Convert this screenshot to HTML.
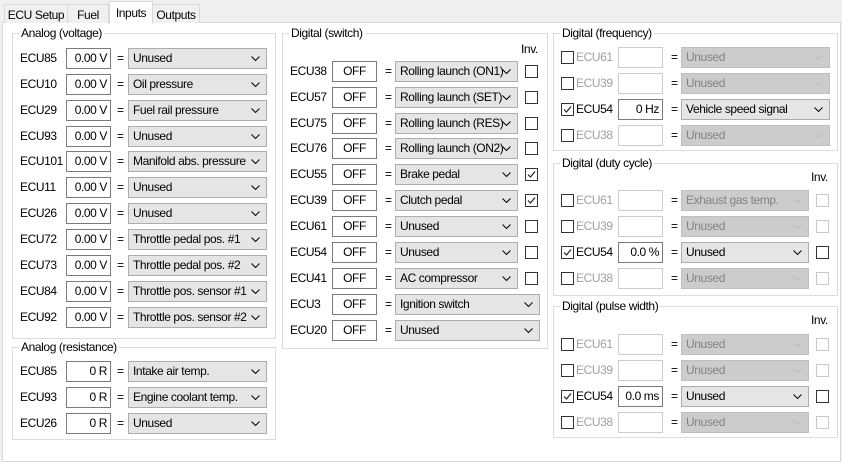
<!DOCTYPE html>
<html><head><meta charset="utf-8">
<style>
*{box-sizing:border-box;margin:0;padding:0}
body{width:842px;height:454px;background:#f0f0f0;font-family:"Liberation Sans",sans-serif;font-size:12px;letter-spacing:-0.4px;color:#000;position:relative;overflow:hidden}
.a{position:absolute}
.tab{position:absolute;top:4px;height:19px;border:1px solid #d9d9d9;border-bottom:none;background:#f0f0f0;padding:3px 0 0 0;text-align:center}
.page{position:absolute;left:2px;top:22px;width:839px;height:440px;background:#fff;border:1px solid #d9d9d9}
.g{position:absolute;border:1px solid #dcdcdc}
.gt{position:absolute;top:-8px;left:6px;background:#fff;padding:0 2px;line-height:14px}
.lb{position:absolute;line-height:14px}
.bx{position:absolute;height:21px;border:1px solid #7a7a7a;background:#fff;line-height:19px;padding:0 3px;text-align:right}
.bx.c{text-align:center}
.bx.d{border-color:#cccccc}
.eq{position:absolute;line-height:14px}
.sl{position:absolute;height:21px;border:1px solid #adadad;background:#e5e5e5;line-height:19px;padding-left:4px;white-space:nowrap;overflow:hidden}
.sl.d{background:#cccccc;border-color:#bfbfbf;color:#838383}
.sl svg{position:absolute;right:6px;top:7px}
.cb{position:absolute;width:13px;height:13px;border:1px solid #333;background:#fff}
.cb.d{border-color:#c8c8c8}
.dis{color:#a0a0a0}
</style></head><body>
<div class="page"></div>
<div class="tab" style="left:4px;width:64px">ECU Setup</div>
<div class="tab" style="left:67px;width:42px">Fuel</div>
<div class="tab" style="left:152px;width:48px">Outputs</div>
<div class="tab" style="left:109px;top:1px;height:23px;width:44px;background:#fff;padding-top:4px">Inputs</div>

<div class="g" style="left:12px;top:33px;width:264px;height:306px"><div class="gt">Analog (voltage)</div></div>
<div class="g" style="left:12px;top:347px;width:264px;height:93px"><div class="gt">Analog (resistance)</div></div>
<div class="g" style="left:282px;top:33px;width:266px;height:316px"><div class="gt">Digital (switch)</div></div>
<div class="lb" style="left:521px;top:42px">Inv.</div>
<div class="g" style="left:553px;top:33px;width:285px;height:118px"><div class="gt">Digital (frequency)</div></div>
<div class="g" style="left:553px;top:163px;width:285px;height:133px"><div class="gt">Digital (duty cycle)</div></div>
<div class="lb" style="left:811px;top:170px">Inv.</div>
<div class="g" style="left:553px;top:306px;width:285px;height:132px"><div class="gt">Digital (pulse width)</div></div>
<div class="lb" style="left:811px;top:313px">Inv.</div>

<svg width="0" height="0" style="position:absolute"><defs><symbol id="ch" viewBox="0 0 9 5"><path d="M0.5 0.5L4.5 4.5L8.5 0.5" fill="none" stroke="currentColor" stroke-width="1"/></symbol><symbol id="ck" viewBox="0 0 11 11"><path d="M2 5.5L4.5 8L9 2.5" fill="none" stroke="#222" stroke-width="1.2"/></symbol></defs></svg>

<div class="lb" style="left:20px;top:51px">ECU85</div><div class="bx" style="left:66px;top:48px;width:45px">0.00 V</div><div class="eq" style="left:117px;top:51px">=</div><div class="sl" style="left:128px;top:48px;width:139px">Unused<svg width="9" height="5"><use href="#ch"/></svg></div>
<div class="lb" style="left:20px;top:77px">ECU10</div><div class="bx" style="left:66px;top:74px;width:45px">0.00 V</div><div class="eq" style="left:117px;top:77px">=</div><div class="sl" style="left:128px;top:74px;width:139px">Oil pressure<svg width="9" height="5"><use href="#ch"/></svg></div>
<div class="lb" style="left:20px;top:103px">ECU29</div><div class="bx" style="left:66px;top:100px;width:45px">0.00 V</div><div class="eq" style="left:117px;top:103px">=</div><div class="sl" style="left:128px;top:100px;width:139px">Fuel rail pressure<svg width="9" height="5"><use href="#ch"/></svg></div>
<div class="lb" style="left:20px;top:129px">ECU93</div><div class="bx" style="left:66px;top:126px;width:45px">0.00 V</div><div class="eq" style="left:117px;top:129px">=</div><div class="sl" style="left:128px;top:126px;width:139px">Unused<svg width="9" height="5"><use href="#ch"/></svg></div>
<div class="lb" style="left:20px;top:154px">ECU101</div><div class="bx" style="left:66px;top:151px;width:45px">0.00 V</div><div class="eq" style="left:117px;top:154px">=</div><div class="sl" style="left:128px;top:151px;width:139px">Manifold abs. pressure<svg width="9" height="5"><use href="#ch"/></svg></div>
<div class="lb" style="left:20px;top:180px">ECU11</div><div class="bx" style="left:66px;top:177px;width:45px">0.00 V</div><div class="eq" style="left:117px;top:180px">=</div><div class="sl" style="left:128px;top:177px;width:139px">Unused<svg width="9" height="5"><use href="#ch"/></svg></div>
<div class="lb" style="left:20px;top:206px">ECU26</div><div class="bx" style="left:66px;top:203px;width:45px">0.00 V</div><div class="eq" style="left:117px;top:206px">=</div><div class="sl" style="left:128px;top:203px;width:139px">Unused<svg width="9" height="5"><use href="#ch"/></svg></div>
<div class="lb" style="left:20px;top:232px">ECU72</div><div class="bx" style="left:66px;top:229px;width:45px">0.00 V</div><div class="eq" style="left:117px;top:232px">=</div><div class="sl" style="left:128px;top:229px;width:139px">Throttle pedal pos. #1<svg width="9" height="5"><use href="#ch"/></svg></div>
<div class="lb" style="left:20px;top:258px">ECU73</div><div class="bx" style="left:66px;top:255px;width:45px">0.00 V</div><div class="eq" style="left:117px;top:258px">=</div><div class="sl" style="left:128px;top:255px;width:139px">Throttle pedal pos. #2<svg width="9" height="5"><use href="#ch"/></svg></div>
<div class="lb" style="left:20px;top:284px">ECU84</div><div class="bx" style="left:66px;top:281px;width:45px">0.00 V</div><div class="eq" style="left:117px;top:284px">=</div><div class="sl" style="left:128px;top:281px;width:139px">Throttle pos. sensor #1<svg width="9" height="5"><use href="#ch"/></svg></div>
<div class="lb" style="left:20px;top:310px">ECU92</div><div class="bx" style="left:66px;top:307px;width:45px">0.00 V</div><div class="eq" style="left:117px;top:310px">=</div><div class="sl" style="left:128px;top:307px;width:139px">Throttle pos. sensor #2<svg width="9" height="5"><use href="#ch"/></svg></div>

<div class="lb" style="left:20px;top:364px">ECU85</div><div class="bx" style="left:66px;top:361px;width:45px">0 R</div><div class="eq" style="left:117px;top:364px">=</div><div class="sl" style="left:128px;top:361px;width:139px">Intake air temp.<svg width="9" height="5"><use href="#ch"/></svg></div>
<div class="lb" style="left:20px;top:390px">ECU93</div><div class="bx" style="left:66px;top:387px;width:45px">0 R</div><div class="eq" style="left:117px;top:390px">=</div><div class="sl" style="left:128px;top:387px;width:139px">Engine coolant temp.<svg width="9" height="5"><use href="#ch"/></svg></div>
<div class="lb" style="left:20px;top:416px">ECU26</div><div class="bx" style="left:66px;top:413px;width:45px">0 R</div><div class="eq" style="left:117px;top:416px">=</div><div class="sl" style="left:128px;top:413px;width:139px">Unused<svg width="9" height="5"><use href="#ch"/></svg></div>

<div class="lb" style="left:290px;top:64px">ECU38</div><div class="bx c" style="left:332px;top:61px;width:45px">OFF</div><div class="eq" style="left:385px;top:64px">=</div><div class="sl" style="left:395px;top:61px;width:123px">Rolling launch (ON1)<svg width="9" height="5"><use href="#ch"/></svg></div><div class="cb" style="left:525px;top:65px"></div>
<div class="lb" style="left:290px;top:90px">ECU57</div><div class="bx c" style="left:332px;top:87px;width:45px">OFF</div><div class="eq" style="left:385px;top:90px">=</div><div class="sl" style="left:395px;top:87px;width:123px">Rolling launch (SET)<svg width="9" height="5"><use href="#ch"/></svg></div><div class="cb" style="left:525px;top:91px"></div>
<div class="lb" style="left:290px;top:116px">ECU75</div><div class="bx c" style="left:332px;top:113px;width:45px">OFF</div><div class="eq" style="left:385px;top:116px">=</div><div class="sl" style="left:395px;top:113px;width:123px">Rolling launch (RES)<svg width="9" height="5"><use href="#ch"/></svg></div><div class="cb" style="left:525px;top:117px"></div>
<div class="lb" style="left:290px;top:141px">ECU76</div><div class="bx c" style="left:332px;top:138px;width:45px">OFF</div><div class="eq" style="left:385px;top:141px">=</div><div class="sl" style="left:395px;top:138px;width:123px">Rolling launch (ON2)<svg width="9" height="5"><use href="#ch"/></svg></div><div class="cb" style="left:525px;top:142px"></div>
<div class="lb" style="left:290px;top:167px">ECU55</div><div class="bx c" style="left:332px;top:164px;width:45px">OFF</div><div class="eq" style="left:385px;top:167px">=</div><div class="sl" style="left:395px;top:164px;width:123px">Brake pedal<svg width="9" height="5"><use href="#ch"/></svg></div><div class="cb" style="left:525px;top:168px"><svg width="11" height="11" style="display:block"><use href="#ck"/></svg></div>
<div class="lb" style="left:290px;top:193px">ECU39</div><div class="bx c" style="left:332px;top:190px;width:45px">OFF</div><div class="eq" style="left:385px;top:193px">=</div><div class="sl" style="left:395px;top:190px;width:123px">Clutch pedal<svg width="9" height="5"><use href="#ch"/></svg></div><div class="cb" style="left:525px;top:194px"><svg width="11" height="11" style="display:block"><use href="#ck"/></svg></div>
<div class="lb" style="left:290px;top:219px">ECU61</div><div class="bx c" style="left:332px;top:216px;width:45px">OFF</div><div class="eq" style="left:385px;top:219px">=</div><div class="sl" style="left:395px;top:216px;width:123px">Unused<svg width="9" height="5"><use href="#ch"/></svg></div><div class="cb" style="left:525px;top:220px"></div>
<div class="lb" style="left:290px;top:245px">ECU54</div><div class="bx c" style="left:332px;top:242px;width:45px">OFF</div><div class="eq" style="left:385px;top:245px">=</div><div class="sl" style="left:395px;top:242px;width:123px">Unused<svg width="9" height="5"><use href="#ch"/></svg></div><div class="cb" style="left:525px;top:246px"></div>
<div class="lb" style="left:290px;top:271px">ECU41</div><div class="bx c" style="left:332px;top:268px;width:45px">OFF</div><div class="eq" style="left:385px;top:271px">=</div><div class="sl" style="left:395px;top:268px;width:123px">AC compressor<svg width="9" height="5"><use href="#ch"/></svg></div><div class="cb" style="left:525px;top:272px"></div>
<div class="lb" style="left:290px;top:297px">ECU3</div><div class="bx c" style="left:332px;top:294px;width:45px">OFF</div><div class="eq" style="left:385px;top:297px">=</div><div class="sl" style="left:395px;top:294px;width:145px">Ignition switch<svg width="9" height="5"><use href="#ch"/></svg></div>
<div class="lb" style="left:290px;top:323px">ECU20</div><div class="bx c" style="left:332px;top:320px;width:45px">OFF</div><div class="eq" style="left:385px;top:323px">=</div><div class="sl" style="left:395px;top:320px;width:145px">Unused<svg width="9" height="5"><use href="#ch"/></svg></div>

<div class="cb" style="left:561px;top:51px"></div><div class="lb dis" style="left:576px;top:50px">ECU61</div><div class="bx d" style="left:618px;top:47px;width:45px"></div><div class="eq" style="left:671px;top:50px">=</div><div class="sl d" style="left:681px;top:47px;width:149px">Unused<svg width="9" height="5" style="color:#bbb"><use href="#ch"/></svg></div>
<div class="cb" style="left:561px;top:77px"></div><div class="lb dis" style="left:576px;top:76px">ECU39</div><div class="bx d" style="left:618px;top:73px;width:45px"></div><div class="eq" style="left:671px;top:76px">=</div><div class="sl d" style="left:681px;top:73px;width:149px">Unused<svg width="9" height="5" style="color:#bbb"><use href="#ch"/></svg></div>
<div class="cb" style="left:561px;top:103px"><svg width="11" height="11" style="display:block"><use href="#ck"/></svg></div><div class="lb" style="left:576px;top:102px">ECU54</div><div class="bx" style="left:618px;top:99px;width:45px">0 Hz</div><div class="eq" style="left:671px;top:102px">=</div><div class="sl" style="left:681px;top:99px;width:149px">Vehicle speed signal<svg width="9" height="5"><use href="#ch"/></svg></div>
<div class="cb" style="left:561px;top:129px"></div><div class="lb dis" style="left:576px;top:128px">ECU38</div><div class="bx d" style="left:618px;top:125px;width:45px"></div><div class="eq" style="left:671px;top:128px">=</div><div class="sl d" style="left:681px;top:125px;width:149px">Unused<svg width="9" height="5" style="color:#bbb"><use href="#ch"/></svg></div>

<div class="cb" style="left:561px;top:194px"></div><div class="lb dis" style="left:576px;top:193px">ECU61</div><div class="bx d" style="left:618px;top:190px;width:45px"></div><div class="eq" style="left:671px;top:193px">=</div><div class="sl d" style="left:681px;top:190px;width:128px">Exhaust gas temp.<svg width="9" height="5" style="color:#bbb"><use href="#ch"/></svg></div><div class="cb d" style="left:816px;top:194px"></div>
<div class="cb" style="left:561px;top:220px"></div><div class="lb dis" style="left:576px;top:219px">ECU39</div><div class="bx d" style="left:618px;top:216px;width:45px"></div><div class="eq" style="left:671px;top:219px">=</div><div class="sl d" style="left:681px;top:216px;width:128px">Unused<svg width="9" height="5" style="color:#bbb"><use href="#ch"/></svg></div><div class="cb d" style="left:816px;top:220px"></div>
<div class="cb" style="left:561px;top:246px"><svg width="11" height="11" style="display:block"><use href="#ck"/></svg></div><div class="lb" style="left:576px;top:245px">ECU54</div><div class="bx" style="left:618px;top:242px;width:45px">0.0 %</div><div class="eq" style="left:671px;top:245px">=</div><div class="sl" style="left:681px;top:242px;width:128px">Unused<svg width="9" height="5"><use href="#ch"/></svg></div><div class="cb" style="left:816px;top:246px"></div>
<div class="cb" style="left:561px;top:272px"></div><div class="lb dis" style="left:576px;top:271px">ECU38</div><div class="bx d" style="left:618px;top:268px;width:45px"></div><div class="eq" style="left:671px;top:271px">=</div><div class="sl d" style="left:681px;top:268px;width:128px">Unused<svg width="9" height="5" style="color:#bbb"><use href="#ch"/></svg></div><div class="cb d" style="left:816px;top:272px"></div>

<div class="cb" style="left:561px;top:338px"></div><div class="lb dis" style="left:576px;top:337px">ECU61</div><div class="bx d" style="left:618px;top:334px;width:45px"></div><div class="eq" style="left:671px;top:337px">=</div><div class="sl d" style="left:681px;top:334px;width:128px">Unused<svg width="9" height="5" style="color:#bbb"><use href="#ch"/></svg></div><div class="cb d" style="left:816px;top:338px"></div>
<div class="cb" style="left:561px;top:364px"></div><div class="lb dis" style="left:576px;top:363px">ECU39</div><div class="bx d" style="left:618px;top:360px;width:45px"></div><div class="eq" style="left:671px;top:363px">=</div><div class="sl d" style="left:681px;top:360px;width:128px">Unused<svg width="9" height="5" style="color:#bbb"><use href="#ch"/></svg></div><div class="cb d" style="left:816px;top:364px"></div>
<div class="cb" style="left:561px;top:390px"><svg width="11" height="11" style="display:block"><use href="#ck"/></svg></div><div class="lb" style="left:576px;top:389px">ECU54</div><div class="bx" style="left:618px;top:386px;width:45px">0.0 ms</div><div class="eq" style="left:671px;top:389px">=</div><div class="sl" style="left:681px;top:386px;width:128px">Unused<svg width="9" height="5"><use href="#ch"/></svg></div><div class="cb" style="left:816px;top:390px"></div>
<div class="cb" style="left:561px;top:416px"></div><div class="lb dis" style="left:576px;top:415px">ECU38</div><div class="bx d" style="left:618px;top:412px;width:45px"></div><div class="eq" style="left:671px;top:415px">=</div><div class="sl d" style="left:681px;top:412px;width:128px">Unused<svg width="9" height="5" style="color:#bbb"><use href="#ch"/></svg></div><div class="cb d" style="left:816px;top:416px"></div>
</body></html>
